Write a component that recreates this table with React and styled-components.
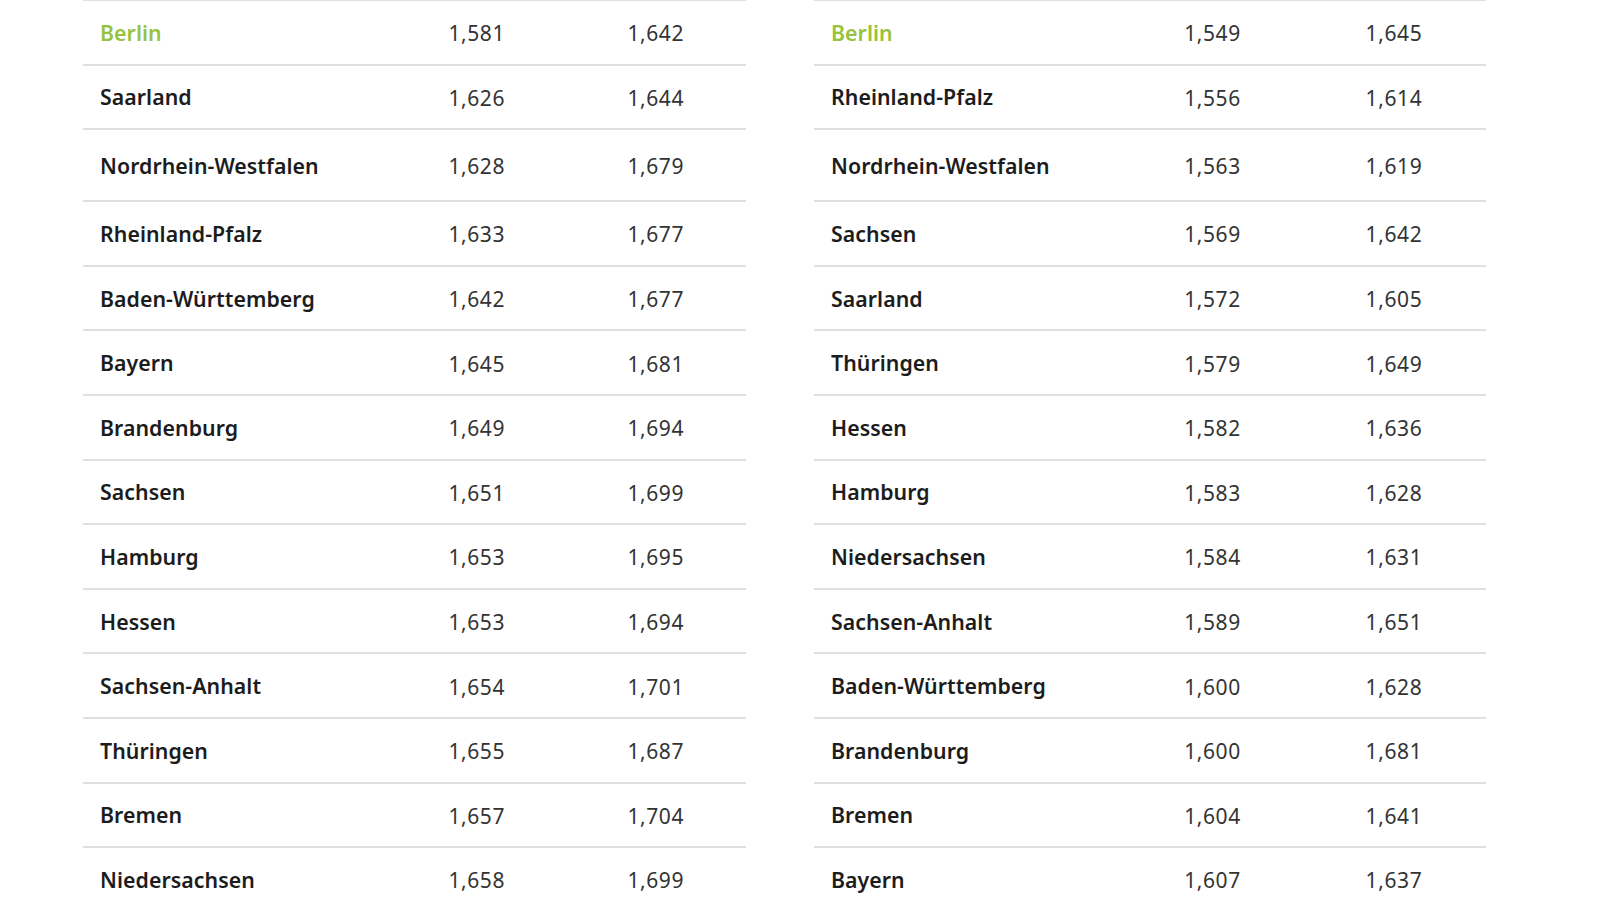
import React from "react";
import styled, { createGlobalStyle } from "styled-components";

const Global = createGlobalStyle`
  html, body { margin: 0; padding: 0; background: #fff; }
  body { overflow: hidden; font-family: "Noto Sans", "Open Sans", sans-serif; }
`;

const Page = styled.div`
  display: grid;
  grid-template-columns: 663px 672px;
  column-gap: 68px;
  padding-left: 83px;
  margin-top: -1px;
  align-items: start;
`;

const Table = styled.div`
  display: flex;
  flex-direction: column;
  border-top: 2px solid #e0e0e0;
`;

const Row = styled.div`
  display: grid;
  grid-template-columns: 52.7% 27% 20.3%;
  align-items: center;
  box-sizing: border-box;
  height: ${(p) => (p.$tall ? "72px" : "64.6px")};
  border-bottom: 2px solid #e0e0e0;
`;

const Name = styled.div`
  padding-left: 17px;
  font-size: 21.3px;
  font-weight: 600;
  letter-spacing: 0.05px;
  color: ${(p) => (p.$highlight ? "#97c23d" : "#1c1c1c")};
`;

const Num = styled.div`
  padding-left: 16px;
  padding-top: 2px;
  font-size: 21px;
  font-weight: 400;
  letter-spacing: 0.6px;
  color: #333;
`;

const left = [
  ["Berlin", "1,581", "1,642"],
  ["Saarland", "1,626", "1,644"],
  ["Nordrhein-Westfalen", "1,628", "1,679"],
  ["Rheinland-Pfalz", "1,633", "1,677"],
  ["Baden-Württemberg", "1,642", "1,677"],
  ["Bayern", "1,645", "1,681"],
  ["Brandenburg", "1,649", "1,694"],
  ["Sachsen", "1,651", "1,699"],
  ["Hamburg", "1,653", "1,695"],
  ["Hessen", "1,653", "1,694"],
  ["Sachsen-Anhalt", "1,654", "1,701"],
  ["Thüringen", "1,655", "1,687"],
  ["Bremen", "1,657", "1,704"],
  ["Niedersachsen", "1,658", "1,699"],
];

const right = [
  ["Berlin", "1,549", "1,645"],
  ["Rheinland-Pfalz", "1,556", "1,614"],
  ["Nordrhein-Westfalen", "1,563", "1,619"],
  ["Sachsen", "1,569", "1,642"],
  ["Saarland", "1,572", "1,605"],
  ["Thüringen", "1,579", "1,649"],
  ["Hessen", "1,582", "1,636"],
  ["Hamburg", "1,583", "1,628"],
  ["Niedersachsen", "1,584", "1,631"],
  ["Sachsen-Anhalt", "1,589", "1,651"],
  ["Baden-Württemberg", "1,600", "1,628"],
  ["Brandenburg", "1,600", "1,681"],
  ["Bremen", "1,604", "1,641"],
  ["Bayern", "1,607", "1,637"],
];

function PriceTable({ rows }) {
  return (
    <Table>
      {rows.map(([name, a, b], i) => (
        <Row key={name} $tall={i === 2}>
          <Name $highlight={name === "Berlin"}>{name}</Name>
          <Num>{a}</Num>
          <Num>{b}</Num>
        </Row>
      ))}
    </Table>
  );
}

export default function App() {
  return (
    <>
      <Global />
      <Page>
        <PriceTable rows={left} />
        <PriceTable rows={right} />
      </Page>
    </>
  );
}
